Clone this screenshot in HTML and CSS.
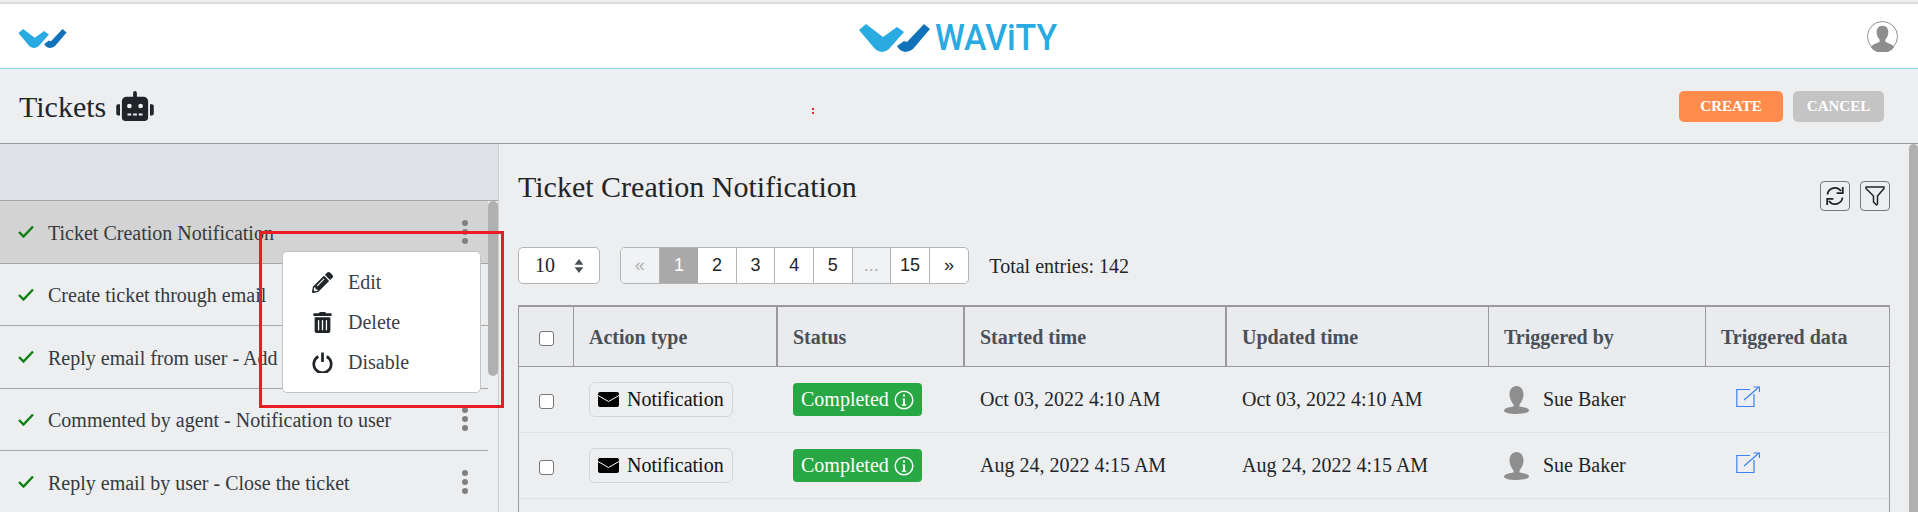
FILE: index.html
```html
<!DOCTYPE html>
<html lang="en">
<head>
    <meta charset="UTF-8">
    <meta name="viewport" content="width=device-width, initial-scale=1.0">
    <title>Wavity Tickets</title>
    <link rel="stylesheet" href="styles.css">
</head>
<body>
    <header class="topbar">
        <svg class="logo-small" viewBox="0 0 71 28">
            <path fill="#29abe2" d="M0 6 7 0 24 13 38 3 45 8 30 25 Q23 31 16 25Z"/>
            <path fill="#1272b9" d="M38 22 45 17 48 18 65 0 71 5 54 25Q46 31 40 25Z"/>
        </svg>
        <div class="brand">
            <svg class="logo-mark" viewBox="0 0 71 28">
                <path fill="#29abe2" d="M0 6 7 0 24 13 38 3 45 8 30 25 Q23 31 16 25Z"/>
                <path fill="#1272b9" d="M38 22 45 17 48 18 65 0 71 5 54 25Q46 31 40 25Z"/>
            </svg>
            <span class="brand-name">WAViTY</span>
        </div>
        <svg class="avatar" viewBox="0 0 32 32">
            <circle cx="16" cy="16" r="15.5" fill="#fff" stroke="#8e8e8e"/>
            <path fill="#8e8e8e" d="M16 5c4 0 6 3 6 6.500 0 3-1.500 6-3 7.500v2.500c2 1.500 7 2 9 5.500a15 15 0 0 1-24 0c2-3.500 7-4 9-5.500V19c-1.500-1.500-3-4.500-3-7.500C10 8 12 5 16 5Z"/>
        </svg>
    </header>

    <div class="page-head">
        <h1 class="page-title"><span class="page-name">Tickets</span>
            <svg class="robot" viewBox="0 0 640 512"><path fill="#212529" d="M32,224H64V416H32A31.96166,31.96166,0,0,1,0,384V256A31.96166,31.96166,0,0,1,32,224Zm512-48V448a64.06328,64.06328,0,0,1-64,64H160a64.06328,64.06328,0,0,1-64-64V176a79.974,79.974,0,0,1,80-80H288V32a32,32,0,0,1,64,0V96H464A79.974,79.974,0,0,1,544,176ZM264,256a40,40,0,1,0-40,40A39.997,39.997,0,0,0,264,256Zm-8,128H192v32h64Zm96,0H288v32h64ZM456,256a40,40,0,1,0-40,40A39.997,39.997,0,0,0,456,256Zm-8,128H384v32h64ZM640,256V384a31.96166,31.96166,0,0,1-32,32H576V224h32A31.96166,31.96166,0,0,1,640,256Z"/></svg>
        </h1>
        <span class="red-mark"></span>
        <div class="head-actions">
            <button class="btn btn-create">CREATE</button>
            <button class="btn btn-cancel">CANCEL</button>
        </div>
    </div>

    <div class="main">
        <aside class="sidebar">
            <div class="sidebar-head"></div>
            <ul class="flow-list">
                <li class="flow-item active">
                    <svg class="check" viewBox="0 0 16 13"><path d="M1 7 5.500 11.500 15 1.500" /></svg>
                    <span class="flow-name">Ticket Creation Notification</span>
                    <span class="dots"><i></i><i></i><i></i></span>
                </li>
                <li class="flow-item">
                    <svg class="check" viewBox="0 0 16 13"><path d="M1 7 5.500 11.500 15 1.500" /></svg>
                    <span class="flow-name">Create ticket through email</span>
                    <span class="dots"><i></i><i></i><i></i></span>
                </li>
                <li class="flow-item">
                    <svg class="check" viewBox="0 0 16 13"><path d="M1 7 5.500 11.500 15 1.500" /></svg>
                    <span class="flow-name">Reply email from user - Add</span>
                    <span class="dots"><i></i><i></i><i></i></span>
                </li>
                <li class="flow-item">
                    <svg class="check" viewBox="0 0 16 13"><path d="M1 7 5.500 11.500 15 1.500" /></svg>
                    <span class="flow-name">Commented by agent - Notification to user</span>
                    <span class="dots"><i></i><i></i><i></i></span>
                </li>
                <li class="flow-item">
                    <svg class="check" viewBox="0 0 16 13"><path d="M1 7 5.500 11.500 15 1.500" /></svg>
                    <span class="flow-name">Reply email by user - Close the ticket</span>
                    <span class="dots"><i></i><i></i><i></i></span>
                </li>
            </ul>
            <div class="thumb thumb-side"></div>

            <div class="menu">
                <div class="menu-item">
                    <svg class="menu-icon" viewBox="0 0 512 512"><path fill="#212529" d="M497.9 142.100l-46.100 46.100c-4.700 4.700-12.300 4.700-17 0l-111-111c-4.700-4.700-4.700-12.300 0-17l46.100-46.100c18.700-18.700 49.100-18.700 67.900 0l60.100 60.100c18.800 18.700 18.800 49.100 0 67.900zM284.200 99.800L21.600 362.400.4 483.900c-2.900 16.400 11.400 30.600 27.800 27.800l121.500-21.300 262.600-262.600c4.700-4.700 4.700-12.300 0-17l-111-111c-4.800-4.700-12.400-4.700-17.100 0zM124.100 339.900c-5.500-5.500-5.500-14.300 0-19.800l154-154c5.500-5.500 14.300-5.500 19.800 0s5.500 14.300 0 19.800l-154 154c-5.500 5.500-14.300 5.500-19.800 0zM88 424h48v36.300l-64.500 11.300-31.100-31.100L51.700 376H88v48z"/></svg>
                    <span>Edit</span>
                </div>
                <div class="menu-item">
                    <svg class="menu-icon" viewBox="0 0 448 512"><path fill="#212529" d="M32 464a48 48 0 0 0 48 48h288a48 48 0 0 0 48-48V128H32zm272-256a16 16 0 0 1 32 0v224a16 16 0 0 1-32 0zm-96 0a16 16 0 0 1 32 0v224a16 16 0 0 1-32 0zm-96 0a16 16 0 0 1 32 0v224a16 16 0 0 1-32 0zM432 32H312l-9.400-18.700A24 24 0 0 0 281.100 0H166.800a23.720 23.720 0 0 0-21.400 13.300L136 32H16A16 16 0 0 0 0 48v32a16 16 0 0 0 16 16h416a16 16 0 0 0 16-16V48a16 16 0 0 0-16-16z"/></svg>
                    <span>Delete</span>
                </div>
                <div class="menu-item">
                    <svg class="menu-icon" viewBox="0 0 20 20"><path fill="none" stroke="#212529" stroke-width="2.600" d="M6 4.300a8.300 8.300 0 1 0 8 0M10 .5v9"/></svg>
                    <span>Disable</span>
                </div>
            </div>
            <div class="annotation"></div>
        </aside>

        <section class="content">
            <div class="content-head">
                <h2 class="content-title">Ticket Creation Notification</h2>
                <div class="tools">
                    <span class="tool">
                        <svg viewBox="0 0 20 20"><path fill="none" stroke="#212529" stroke-width="1.800" d="M2.500 8.500A7.500 7.500 0 0 1 16 5M17.800 1v6.200h-6.200M17.500 11.500A7.500 7.500 0 0 1 4 15M2.200 19v-6.200h6.200"/></svg>
                    </span>
                    <span class="tool">
                        <svg viewBox="0 0 20 20"><path fill="none" stroke="#212529" stroke-width="1.500" stroke-linejoin="round" d="M1 1h18v1.500L12.500 10v8l-1 1-3-3v-6L1 2.500Z"/></svg>
                    </span>
                </div>
            </div>

            <div class="toolbar">
                <div class="page-size">10
                    <svg class="sort" viewBox="0 0 10 16"><path fill="#495057" d="M5 0 10 6.500H0ZM5 16 0 9.500H10Z"/></svg>
                </div>
                <ul class="pager">
                    <li class="off">«</li>
                    <li class="current">1</li>
                    <li>2</li>
                    <li>3</li>
                    <li>4</li>
                    <li>5</li>
                    <li class="off">...</li>
                    <li>15</li>
                    <li>»</li>
                </ul>
                <span class="total">Total entries: 142</span>
            </div>

            <table class="log-table">
                <colgroup>
                    <col class="col-check">
                    <col class="col-action">
                    <col class="col-status">
                    <col class="col-time">
                    <col class="col-time">
                    <col class="col-by">
                    <col class="col-data">
                </colgroup>
                <thead>
                    <tr>
                        <th class="center"><span class="box"></span></th>
                        <th class="thick">Action type</th>
                        <th class="thick">Status</th>
                        <th class="thick">Started time</th>
                        <th>Updated time</th>
                        <th>Triggered by</th>
                        <th class="last">Triggered data</th>
                    </tr>
                </thead>
                <tbody>
                    <tr>
                        <td class="center"><span class="box"></span></td>
                        <td><span class="pill">
                            <svg class="mail" viewBox="0 0 21 15"><rect width="21" height="15" rx="2"/><path fill="none" stroke="#fff" d="M0 3.500 10.500 9.500 21 3.500"/></svg>
                            Notification</span></td>
                        <td><span class="state">Completed
                            <svg class="info" viewBox="0 0 20 20"><circle cx="10" cy="10" r="8.800" fill="none" stroke="#fff" stroke-width="1.500"/><path fill="#fff" d="M8.500 8.500h2.500v6h1.200v1.200H7.800v-1.200H9V9.700H8.500ZM9 4.500h2v2H9Z"/></svg>
                        </span></td>
                        <td class="time">Oct 03, 2022 4:10 AM</td>
                        <td class="time">Oct 03, 2022 4:10 AM</td>
                        <td><span class="user">
                            <svg class="user-icon" viewBox="0 0 25 28"><path fill="#8e8e8e" d="M12.500 0c4.500 0 7 4 7 8.500 0 4-2 7.500-4 10v2c3 .5 9.500 1.500 9.500 4 0 2-5 3.500-12.500 3.500S0 26.500 0 24.500c0-2.500 6.500-3.500 9.500-4v-2c-2-2.500-4-6-4-10C5.500 4 8 0 12.500 0Z"/></svg>
                            Sue Baker</span></td>
                        <td class="last"><svg class="open" viewBox="0 0 24 21"><path fill="none" stroke="#3b82f6" stroke-width="1.200" d="M14 3.500H.8v17H18V8M8 14 23 1M17.500 1H23.500V6"/></svg></td>
                    </tr>
                    <tr>
                        <td class="center"><span class="box"></span></td>
                        <td><span class="pill">
                            <svg class="mail" viewBox="0 0 21 15"><rect width="21" height="15" rx="2"/><path fill="none" stroke="#fff" d="M0 3.500 10.500 9.500 21 3.500"/></svg>
                            Notification</span></td>
                        <td><span class="state">Completed
                            <svg class="info" viewBox="0 0 20 20"><circle cx="10" cy="10" r="8.800" fill="none" stroke="#fff" stroke-width="1.500"/><path fill="#fff" d="M8.500 8.500h2.500v6h1.200v1.200H7.800v-1.200H9V9.700H8.500ZM9 4.500h2v2H9Z"/></svg>
                        </span></td>
                        <td class="time">Aug 24, 2022 4:15 AM</td>
                        <td class="time">Aug 24, 2022 4:15 AM</td>
                        <td><span class="user">
                            <svg class="user-icon" viewBox="0 0 25 28"><path fill="#8e8e8e" d="M12.500 0c4.500 0 7 4 7 8.500 0 4-2 7.500-4 10v2c3 .5 9.500 1.500 9.500 4 0 2-5 3.500-12.500 3.500S0 26.500 0 24.500c0-2.500 6.500-3.500 9.500-4v-2c-2-2.500-4-6-4-10C5.500 4 8 0 12.500 0Z"/></svg>
                            Sue Baker</span></td>
                        <td class="last"><svg class="open" viewBox="0 0 24 21"><path fill="none" stroke="#3b82f6" stroke-width="1.200" d="M14 3.500H.8v17H18V8M8 14 23 1M17.500 1H23.500V6"/></svg></td>
                    </tr>
                    <tr class="empty-row">
                        <td></td><td></td><td></td><td></td><td></td><td></td><td class="last"></td>
                    </tr>
                </tbody>
            </table>
            <div class="thumb thumb-main"></div>
        </section>
    </div>
</body>
</html>
```

FILE: styles.css
```css
* {
    box-sizing: border-box;
}

html, body {
    height: 512px;
    overflow: hidden;
}

body {
    margin: 0;
    font-family: "Liberation Serif", "Times New Roman", serif;
    font-size: 20px;
    color: #212529;
    background-color: #edeef0;
}

/* top bar */
.topbar {
    height: 67px;
    background: white;
    border-top: 2px solid #dcdcdc;
    margin-top: 2px;
    border-bottom: 1px solid #8fd4e8;
    display: flex;
    align-items: center;
    justify-content: space-between;
    padding: 0 20px 0 18px;
    position: relative;
}

.logo-small {
    width: 49px;
    height: 19px;
    margin-top: 4px;
}

.brand {
    position: absolute;
    left: 859px;
    top: 19px;
    display: flex;
    align-items: center;
    gap: 5px;
}

.logo-mark {
    width: 71px;
    height: 28px;
}

.brand-name {
    font-family: Roboto, "Liberation Sans", Arial, sans-serif;
    font-size: 36px;
    font-weight: 500;
    line-height: 30px;
    color: #29abe2;
    display: inline-block;
    width: 124px;
    transform: scaleX(0.94);
    transform-origin: left center;
}

.avatar {
    width: 31px;
    height: 31px;
}

/* page header */
.page-head {
    height: 75px;
    border-bottom: 1px solid #999;
    display: flex;
    align-items: center;
    justify-content: space-between;
    padding: 0 34px 0 19px;
    position: relative;
}

.page-title {
    margin: 0;
    font-size: 30px;
    font-weight: 400;
    display: flex;
    align-items: center;
    gap: 10px;
}

.page-name {
    padding-top: 2px;
}

.robot {
    width: 38px;
    height: 30px;
}

.red-mark {
    position: absolute;
    left: 812px;
    top: 39px;
    width: 2px;
    height: 6px;
    border-top: 2px solid #e8262a;
    border-bottom: 2px solid #e8262a;
}

.head-actions {
    display: flex;
    gap: 10px;
}

.btn {
    height: 31px;
    border: 0;
    border-radius: 5px;
    color: white;
    font-family: inherit;
    font-size: 15px;
    font-weight: 700;
    padding: 0;
}

.btn-create {
    width: 104px;
    background: #ff8c4c;
}

.btn-cancel {
    width: 91px;
    background: #c4c4c4;
}

/* main */
.main {
    display: flex;
    height: 368px;
    overflow: hidden;
}

.sidebar {
    width: 499px;
    flex-shrink: 0;
    border-right: 1px solid #cfcfcf;
    position: relative;
    z-index: 1;
}

.sidebar-head {
    height: 57px;
    background: #e0e1e6;
    border-bottom: 1px solid #a5a5a5;
}

.flow-list {
    list-style: none;
    margin: 0;
    padding: 0;
    width: 488px;
}

.flow-item {
    height: 62.5px;
    border-bottom: 1px solid #a5a5a5;
    display: flex;
    align-items: center;
    padding: 0 20px 0 18px;
    color: #343a40;
}

.flow-item.active {
    background: #d3d3d3;
}

.check {
    width: 16px;
    height: 13px;
    fill: none;
    stroke: #0a800f;
    stroke-width: 2.400;
    flex-shrink: 0;
}

.flow-name {
    margin-left: 14px;
    padding-top: 3px;
    flex: 1;
}

.dots {
    display: flex;
    flex-direction: column;
    gap: 3px;
}

.dots i {
    display: block;
    width: 6px;
    height: 6px;
    border-radius: 50%;
    background: #808080;
}

.thumb {
    position: absolute;
    background: #b0b0b0;
    border-radius: 5px 5px 0 0;
}

.thumb-side {
    left: 488px;
    top: 57px;
    width: 10px;
    height: 175px;
    border-radius: 5px;
}

.thumb-main {
    right: 0;
    top: 0;
    width: 9px;
    bottom: 0;
}

/* popup menu */
.menu {
    position: absolute;
    left: 282px;
    top: 107px;
    width: 199px;
    height: 142px;
    padding: 10px 0 0 29px;
    background: white;
    border: 1px solid #c4c4c4;
    border-radius: 5px;
}

.menu-item {
    height: 40px;
    display: flex;
    align-items: center;
    gap: 15px;
    color: #3c4148;
}

.menu-icon {
    width: 21px;
    height: 21px;
}

.annotation {
    position: absolute;
    left: 259px;
    top: 87px;
    width: 245px;
    height: 177px;
    border: 3px solid #ed1c24;
    pointer-events: none;
}

/* right side */
.content {
    flex: 1;
    padding: 0 28px 0 19px;
    position: relative;
    overflow: hidden;
}

.content-head {
    height: 103px;
    display: flex;
    justify-content: space-between;
    align-items: flex-start;
}

.content-title {
    margin: 24px 0 0;
    font-size: 30px;
    font-weight: 400;
    line-height: 38px;
}

.tools {
    margin-top: 37px;
    display: flex;
    gap: 10px;
}

.tool {
    width: 30px;
    height: 30px;
    border: 1px solid #777;
    border-radius: 4px;
    display: flex;
    align-items: center;
    justify-content: center;
}

.tool svg {
    width: 20px;
    height: 20px;
}

.toolbar {
    display: flex;
    align-items: center;
    height: 37px;
    margin-bottom: 21px;
}

.page-size {
    width: 82px;
    height: 37px;
    background: white;
    border: 1px solid #b5b5b5;
    border-radius: 5px;
    display: flex;
    align-items: center;
    justify-content: space-between;
    padding: 0 15px 0 16px;
}

.sort {
    width: 10px;
    height: 14px;
}

.pager {
    list-style: none;
    margin: 0 0 0 20px;
    padding: 0;
    display: flex;
    height: 37px;
    background: white;
    border: 1px solid #b5b5b5;
    border-radius: 5px;
    overflow: hidden;
    font-family: "Liberation Sans", Arial, sans-serif;
    font-size: 18px;
}

.pager li {
    width: 38.6px;
    display: flex;
    align-items: center;
    justify-content: center;
    border-right: 1px solid #b5b5b5;
}

.pager li:last-child {
    border-right: 0;
}

.pager .off {
    background: #f1f2f3;
    color: #b0b0b0;
}

.pager .current {
    background: #a9a9a9;
    color: white;
    border-right: 0;
}

.total {
    margin-left: 20px;
    padding-top: 2px;
}

/* table */
.log-table {
    table-layout: fixed;
    border-collapse: separate;
    border-spacing: 0;
    width: 1372px;
}

.col-check { width: 56px; }
.col-action { width: 204px; }
.col-status { width: 187px; }
.col-time { width: 262px; }
.col-by { width: 217px; }
.col-data { width: 184px; }

.log-table th {
    height: 62px;
    background: #e9ebee;
    border-top: 2px solid #9a9a9a;
    border-bottom: 1px solid #9a9a9a;
    border-right: 1px solid #9a9a9a;
    text-align: left;
    font-weight: 700;
    color: #495057;
    padding: 2px 15px 0;
}

.log-table th.thick {
    border-right-width: 2px;
}

.log-table th:first-child,
.log-table td:first-child {
    border-left: 1px solid #9a9a9a;
}

.log-table td {
    height: 66px;
    border-bottom: 1px solid #dee2e6;
    padding: 0 15px;
}

.log-table .center {
    text-align: center;
    padding: 0;
}

.log-table .last {
    border-right: 1px solid #9a9a9a;
}

.box {
    display: inline-block;
    width: 15px;
    height: 15px;
    background: white;
    border: 1.5px solid #767676;
    border-radius: 3px;
    vertical-align: middle;
}

.pill {
    display: inline-flex;
    align-items: center;
    gap: 8px;
    height: 35px;
    padding: 0 8px;
    border: 1px solid #d2d4d6;
    border-radius: 6px;
    color: #111;
    vertical-align: middle;
}

.mail {
    width: 21px;
    height: 15px;
    fill: black;
}

.state {
    display: inline-flex;
    align-items: center;
    gap: 5px;
    height: 33px;
    padding: 0 8px;
    background: #28a745;
    border-radius: 4px;
    color: white;
    vertical-align: middle;
}

.info {
    width: 20px;
    height: 20px;
}

.time {
    color: #212529;
}

.user {
    display: inline-flex;
    align-items: center;
    gap: 14px;
    vertical-align: middle;
}

.user-icon {
    width: 25px;
    height: 28px;
}

.open {
    width: 24px;
    height: 21px;
    margin: -6px 0 0 15px;
    display: block;
}
```
